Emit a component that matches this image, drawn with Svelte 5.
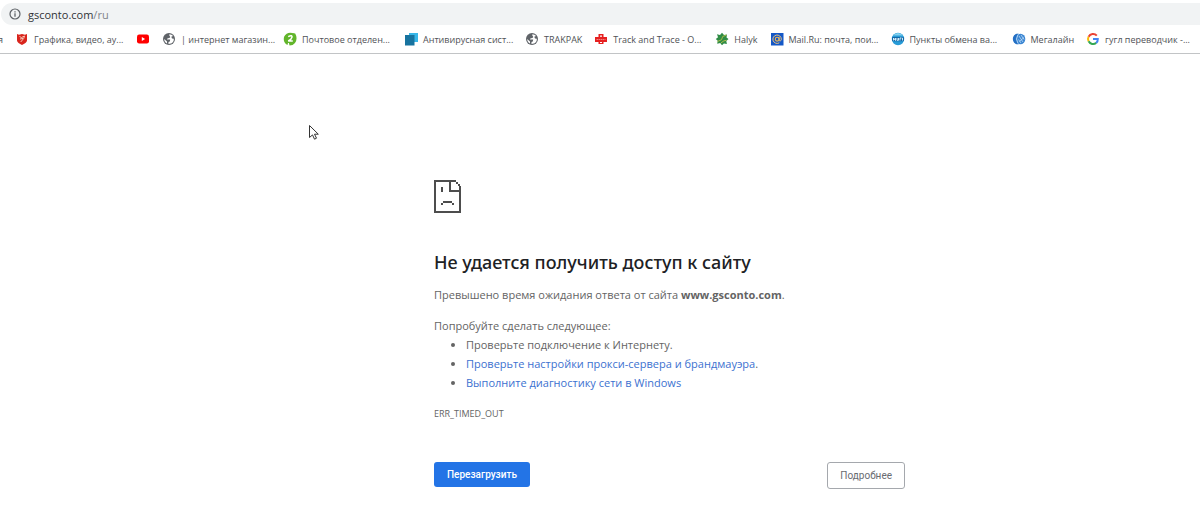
<script lang="ts">
  type Bookmark = { icon: string; title: string; wide?: boolean };

  const bookmarks: Bookmark[] = [
    { icon: 'shield', title: 'Графика, видео, ау...', wide: true },
    { icon: 'youtube', title: '' },
    { icon: 'globe', title: '| интернет магазин...', wide: true },
    { icon: 'post', title: 'Почтовое отделен...', wide: true },
    { icon: 'squares', title: 'Антивирусная сист...', wide: true },
    { icon: 'globe', title: 'TRAKPAK' },
    { icon: 'cross', title: 'Track and Trace - O...', wide: true },
    { icon: 'halyk', title: 'Halyk' },
    { icon: 'mail', title: 'Mail.Ru: почта, пои...', wide: true },
    { icon: 'kurs', title: 'Пункты обмена ва...', wide: true },
    { icon: 'mega', title: 'Мегалайн' },
    { icon: 'google', title: 'гугл переводчик -...', wide: true },
  ];

  function reload() {
    window.location.reload();
  }
</script>

<header>
  <div class="address">
    <svg class="info" viewBox="0 0 12 12" aria-hidden="true">
      <circle cx="6" cy="6" r="5" fill="none" stroke="#5f6368" stroke-width="1.2" />
      <path d="M6 5.3v3.4M6 3.2v1.2" stroke="#5f6368" stroke-width="1.3" />
    </svg>
    <a class="url" href="#site">gsconto.com<span>/ru</span></a>
  </div>

  <nav class="bookmarks">
    <a class="bookmark cut" href="#previous">я</a>
    {#each bookmarks as b}
      <a class="bookmark" class:wide={b.wide} href="#bookmark" aria-label={b.title || 'YouTube'}>
        <svg viewBox="0 0 14 14" aria-hidden="true">
          {#if b.icon === 'shield'}
            <path d="M2 2l2 .8L7 2l3 .8 2-.8v6.5c0 2-2.5 3.2-5 4.5-2.5-1.3-5-2.5-5-4.5z" fill="#d9251d" />
            <path d="M4.5 4.5l2 1 3-1.5-.8 2.5-3 3.5M5 7l3-.6" fill="none" stroke="#f6c9b8" />
          {:else if b.icon === 'youtube'}
            <rect x="1" y="2.5" width="12" height="9" rx="2.2" fill="#f00" />
            <path d="M5.8 5v4l3.3-2z" fill="#fff" />
          {:else if b.icon === 'globe'}
            <circle cx="7" cy="7" r="6" fill="#5f6368" />
            <path d="M7.500 2.200C6.500 4 9 4.200 8 5.500 7 6.500 5 5.800 5 7.400h3.200l-.4 2-1.300.6V12C10 12 12 10 11.800 6.800L10 6.500 9.300 4.800 11 4C10 2.800 9 2.300 7.500 2.200z" fill="#fff" />
            <path d="M2.200 7l2.800 2.600v1.800C3.300 10.800 2.200 9 2.200 7z" fill="#fff" />
          {:else if b.icon === 'post'}
            <path d="M11.5 1.5Q4-1 1.200 4.500-.5 10 4.500 13l.5-2 5.500-.3z" fill="#62b52b" />
            <path d="M10 1.500h2.200Q15 6.500 12 11q-2 2.500-5.500 2.500L5.500 9 9 8z" fill="#62b52b" />
            <path d="M5.200 4.600q4.200-1.800 3.800.6Q8.700 7.200 5.200 9h4.600" fill="none" stroke="#fff" stroke-width="1.5" />
          {:else if b.icon === 'squares'}
            <path d="M5 1h9v9H5z" fill="#38b6e8" />
            <path d="M1 3h9.5v10.5H1z" fill="#17739f" />
          {:else if b.icon === 'cross'}
            <path d="M4.500 2h5v3H13v5H9.500v2h-5v-2H1V5h3.500z" fill="#e62020" />
            <path d="M6 3.500h2v1.300H6zM6 10h2v1H6z" fill="#fff" />
            <path d="M2.500 7.500h9" stroke="#f28080" stroke-dasharray="1.500 .5" />
          {:else if b.icon === 'halyk'}
            <path d="M7 .8l2 2.200 3-.5-.5 3L13.500 7l-2.200 2 .6 3-3-.6L7 13.200 5.200 11l-3 .8.5-3L.8 7 3 5.200 2 2.300l3 .6z" fill="#2f8c45" />
            <path d="M2.500 9.500l4-1.800 1.200-3.200 3.800-1.500M6 10.800l3-2 2.500-.5" fill="none" stroke="#c9c64a" stroke-width=".8" />
          {:else if b.icon === 'mail'}
            <path d="M1 1h12.500v12.500H1z" fill="#1558c7" />
            <circle cx="7.200" cy="7.200" r="1.900" fill="none" stroke="#efb64d" stroke-width="1.1" />
            <path d="M9.100 5.200v2.600c0 1.800 2.200 1.500 2.200-.6a4.200 4.200 0 1 0-2 3.600" fill="none" stroke="#efc47a" />
          {:else if b.icon === 'kurs'}
            <circle cx="7" cy="7" r="6.2" fill="#279bd7" />
            <path d="M2 3.500a6.200 6.200 0 0 1 10 0z" fill="#83d1ef" />
            <rect x="1" y="5" width="12" height="4.2" rx="1" fill="#1268a8" />
            <path d="M2.500 8.500V6l2 2.500V6M6 6v2.300h1.500V6M9 8.500V6h1.500M11.500 5.800v2.700" fill="none" stroke="#e9f8ff" stroke-width=".9" />
          {:else if b.icon === 'mega'}
            <path d="M6.500 1.500C-1 1.500-1 12.500 6.500 12.500L4.500 7z" fill="#236fc4" />
            <ellipse cx="8.5" cy="7" rx="4.8" ry="5.3" fill="#3b86d2" />
            <path d="M6 2.500Q3 7 6 11.500" fill="none" stroke="#cfe5fa" stroke-width=".8" />
            <path d="M7 4l4 6M9 3l3 4.500M6.500 7.500l2.500 3.500M7.500 9.500l4.500-4" stroke="#cfe5fa" stroke-width=".7" />
          {:else}
            <path d="M10.800 3.700A5 5 0 0 0 2.600 4.700" fill="none" stroke="#ea4335" stroke-width="2" />
            <path d="M2.600 4.700a5 5 0 0 0 0 4.600" fill="none" stroke="#fbbc05" stroke-width="2" />
            <path d="M2.600 9.300a5 5 0 0 0 7.600 1.600" fill="none" stroke="#34a853" stroke-width="2" />
            <path d="M7 7h4.800a5 5 0 0 1-1.600 3.900" fill="none" stroke="#4285f4" stroke-width="2" />
          {/if}
        </svg>
        {#if b.title}<span>{b.title}</span>{/if}
      </a>
    {/each}
  </nav>
</header>

<main>
  <div class="error">
    <svg class="sad-page" viewBox="0 0 27 33" aria-hidden="true">
      <path
        fill="#4d4d4d"
        fill-rule="evenodd"
        d="M0 0h22v2H17v8h8V6h2v27H0zM2 2v29h23V12H15V2zM22 2h2v2h-2zM24 4h2v2h-2zM7 7h2v5H7zM9 21h9v2H9zM7 23h2v2H7zM18 23h2v2h-2z"
      />
    </svg>

    <h1>Не удается получить доступ к сайту</h1>
    <p>Превышено время ожидания ответа от сайта <strong>www.gsconto.com</strong>.</p>

    <div class="suggestions">
      <p>Попробуйте сделать следующее:</p>
      <ul>
        <li>Проверьте подключение к Интернету.</li>
        <li><a href="#proxy">Проверьте настройки прокси-сервера и брандмауэра</a>.</li>
        <li><a href="#diagnose">Выполните диагностику сети в Windows</a></li>
      </ul>
    </div>

    <div class="code">ERR_TIMED_OUT</div>

    <div class="buttons">
      <button class="reload" onclick={reload}>Перезагрузить</button>
      <button class="details">Подробнее</button>
    </div>
  </div>
</main>

<svg class="cursor" viewBox="0 0 12 18" aria-hidden="true">
  <path d="M1.5 1.5v12l3-2.6 2 4.3 2-1-2-4h3.800z" fill="#fff" stroke="#333" />
</svg>

<style>
  :global(body) {
    background: #fff;
    color: #646464;
    font-family: 'Open Sans', 'Noto Sans', sans-serif;
    font-size: 11px;
  }

  a {
    color: #3c71d0;
    text-decoration: none;
  }

  header {
    padding-top: 3px;
    border-bottom: 1px solid #c2c4c6;
    overflow: hidden;
  }

  .address {
    display: flex;
    align-items: center;
    gap: 7px;
    height: 22px;
    margin-left: 1px;
    padding-left: 8px;
    background: #f1f3f4;
    border-radius: 11px 0 0 11px;
  }

  .info {
    width: 12px;
    height: 12px;
  }

  .url {
    color: #303236;
    font-size: 11px;
  }

  .url span {
    color: #80848a;
  }

  .bookmarks {
    display: flex;
    align-items: center;
    gap: 12px;
    height: 28px;
    font-size: 9px;
    white-space: nowrap;
  }

  .bookmark {
    display: flex;
    flex-shrink: 0;
    align-items: center;
    gap: 5px;
    color: #505256;
  }

  .bookmark.wide {
    width: 109px;
  }

  .bookmark.cut {
    justify-content: flex-end;
    width: 3px;
  }

  .bookmark svg {
    flex-shrink: 0;
    width: 14px;
    height: 14px;
  }

  main {
    padding: 126px 0 24px 139px;
  }

  .error {
    max-width: 471px;
    margin: 0 auto;
    line-height: 19px;
  }

  .sad-page {
    display: block;
    width: 27px;
    height: 33px;
  }

  h1 {
    margin: 36px 0 10px;
    color: #202124;
    font-family: 'Noto Sans', 'Open Sans', sans-serif;
    font-size: 18px;
    font-weight: 500;
    line-height: 26px;
  }

  p {
    margin: 0;
  }

  .suggestions {
    margin-top: 12px;
  }

  ul {
    margin: 0;
    padding-left: 32px;
  }

  .code {
    margin-top: 12px;
    font-size: 9px;
  }

  .buttons {
    display: flex;
    align-items: flex-start;
    justify-content: space-between;
    margin-top: 39px;
  }

  button {
    height: 25px;
    padding: 0 12px;
    border: 1px solid transparent;
    border-radius: 3px;
    font-family: Roboto, sans-serif;
    font-size: 10px;
    cursor: pointer;
  }

  .reload {
    background: #2374e6;
    color: #fff;
    font-weight: 500;
  }

  .details {
    height: 27px;
    border-color: #a5a8ad;
    background: #fff;
    color: #696b70;
  }

  .cursor {
    position: absolute;
    top: 124px;
    left: 308px;
    width: 12px;
    height: 18px;
  }
</style>
